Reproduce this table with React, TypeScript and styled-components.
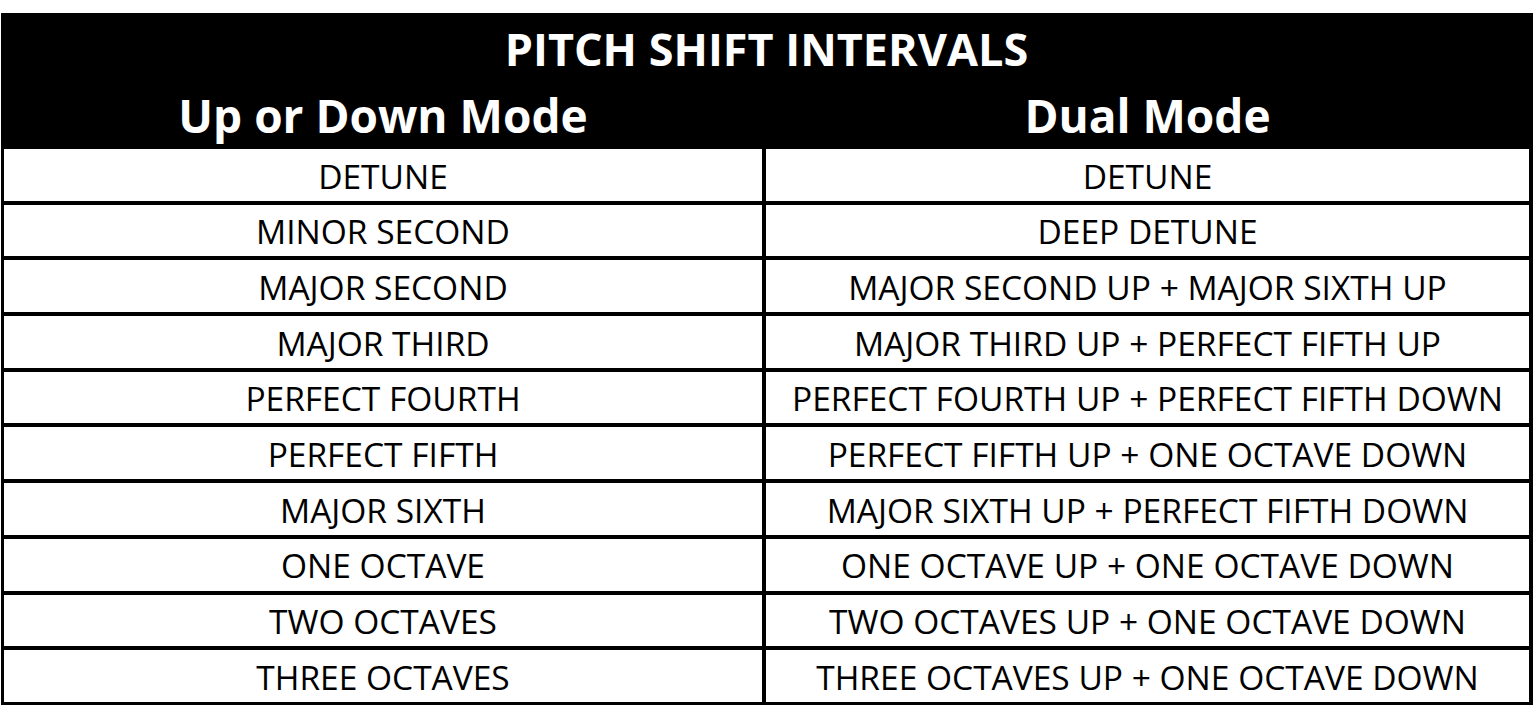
import React from "react";
import styled, { createGlobalStyle } from "styled-components";

interface IntervalRow {
  single: string;
  dual: string;
}

const rows: IntervalRow[] = [
  { single: "DETUNE", dual: "DETUNE" },
  { single: "MINOR SECOND", dual: "DEEP DETUNE" },
  { single: "MAJOR SECOND", dual: "MAJOR SECOND UP + MAJOR SIXTH UP" },
  { single: "MAJOR THIRD", dual: "MAJOR THIRD UP + PERFECT FIFTH UP" },
  { single: "PERFECT FOURTH", dual: "PERFECT FOURTH UP + PERFECT FIFTH DOWN" },
  { single: "PERFECT FIFTH", dual: "PERFECT FIFTH UP + ONE OCTAVE DOWN" },
  { single: "MAJOR SIXTH", dual: "MAJOR SIXTH UP + PERFECT FIFTH DOWN" },
  { single: "ONE OCTAVE", dual: "ONE OCTAVE UP + ONE OCTAVE DOWN" },
  { single: "TWO OCTAVES", dual: "TWO OCTAVES UP + ONE OCTAVE DOWN" },
  { single: "THREE OCTAVES", dual: "THREE OCTAVES UP + ONE OCTAVE DOWN" },
];

const GlobalStyle = createGlobalStyle`
  body {
    margin: 0;
    background: #fff;
    font-family: "Open Sans", "Noto Sans", sans-serif;
  }
`;

const App: React.FC = () => {
  return (
    <Page>
      <GlobalStyle />
      <Table>
        <Title>PITCH SHIFT INTERVALS</Title>
        <ModeHeading>Up or Down Mode</ModeHeading>
        <ModeHeading>Dual Mode</ModeHeading>
        {rows.map((row) => (
          <React.Fragment key={row.single}>
            <Cell>{row.single}</Cell>
            <Cell>{row.dual}</Cell>
          </React.Fragment>
        ))}
      </Table>
    </Page>
  );
};

export default App;

const Page = styled.div`
  padding: 13px 3px 0 1px;
`;

// black background shows through the gaps as the rules
const Table = styled.div`
  width: 1532px;
  box-sizing: border-box;
  display: grid;
  grid-template-columns: 758px 1fr;
  grid-template-rows: 64px 61px repeat(10, 51.7px);
  gap: 4px;
  background: #000;
  padding: 3px 4px 3px 3px;
`;

const Title = styled.div`
  grid-column: 1 / span 2;
  display: flex;
  align-items: center;
  justify-content: center;
  color: #fff;
  font-weight: 700;
  font-size: 45px;
  line-height: 1;
`;

const ModeHeading = styled.div`
  display: flex;
  align-items: center;
  justify-content: center;
  color: #fff;
  font-weight: 700;
  font-size: 46px;
  line-height: 1;
`;

const Cell = styled.div`
  background: #fff;
  display: flex;
  align-items: center;
  justify-content: center;
  padding-top: 3px;
  color: #000;
  font-size: 33.5px;
  line-height: 1;
  white-space: nowrap;
`;
